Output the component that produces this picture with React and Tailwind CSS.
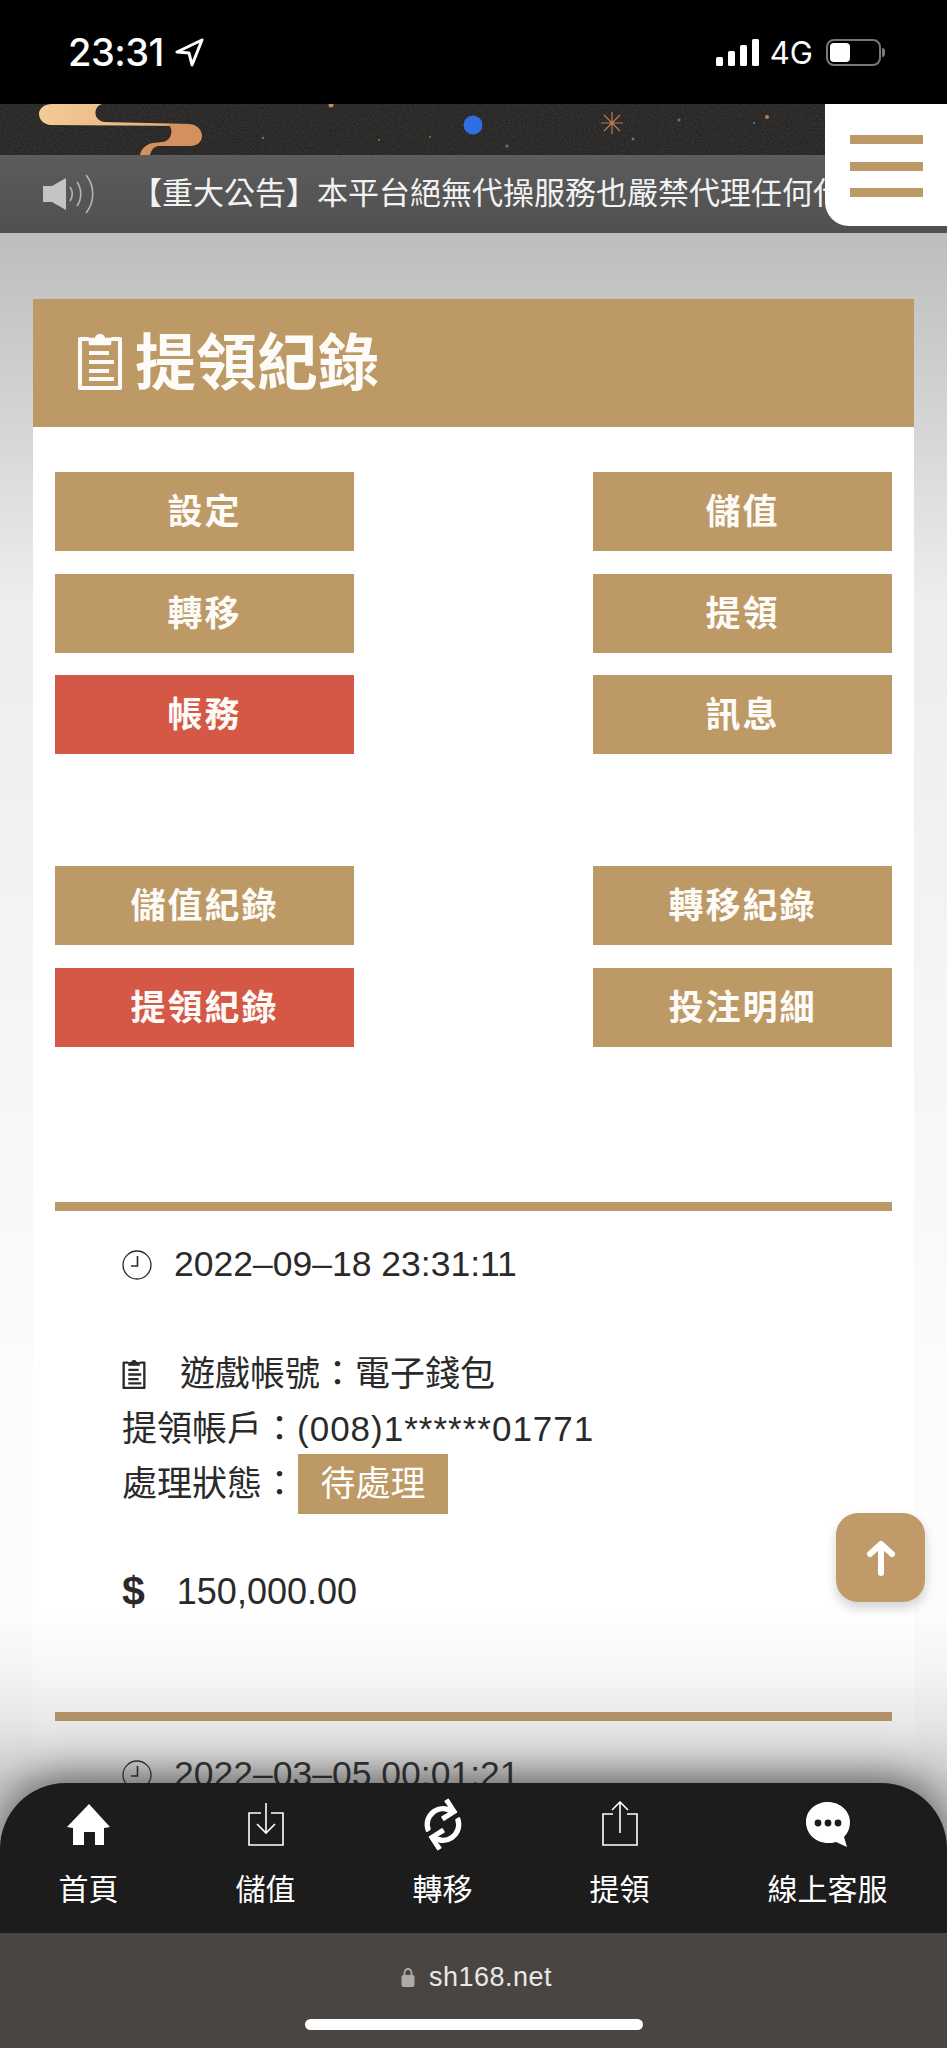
import React from 'react';
import { FaSync } from 'react-icons/fa';

const TOP_BUTTONS = [
  { label: '設定' },
  { label: '儲值' },
  { label: '轉移' },
  { label: '提領' },
  { label: '帳務', active: true },
  { label: '訊息' },
];

const RECORD_BUTTONS = [
  { label: '儲值紀錄' },
  { label: '轉移紀錄' },
  { label: '提領紀錄', active: true },
  { label: '投注明細' },
];

const ClipboardIcon = ({ className, strokeWidth = 4 }) => (
  <svg viewBox="0 0 46 58" className={className} fill="none" stroke="currentColor" strokeWidth={strokeWidth}>
    <path d="M12 7H3v49h40V7H34" strokeLinejoin="round" />
    <path d="M13 12V7h6a4 4 0 0 1 8 0h6v5z" fill="currentColor" strokeWidth="2.5" strokeLinejoin="round" />
    <path d="M12 21h20M12 30h25M12 39h20M12 47h25" />
  </svg>
);

const ClockIcon = ({ className }) => (
  <svg viewBox="0 0 30 30" className={className} fill="none" stroke="currentColor" strokeWidth="1.3">
    <circle cx="15" cy="15" r="14" />
    <path d="M15.5 6v10H9" strokeWidth="1.6" />
  </svg>
);

const HomeIcon = () => (
  <svg viewBox="0 0 43 41" className="w-[43px] h-[41px]" fill="white">
    <path d="M22 0L43 23L37 24V41H28V28H17V41H6V24L0 23z" />
  </svg>
);

const DepositIcon = () => (
  <svg viewBox="0 0 36 43" className="w-[36px] h-[43px]" fill="none" stroke="white" strokeWidth="1.6">
    <path d="M13 10H1v32h34V10H23" />
    <path d="M18 0v30M9 21l9 9 9-9" />
  </svg>
);

const WithdrawIcon = () => (
  <svg viewBox="0 0 36 45" className="w-[36px] h-[45px]" fill="none" stroke="white" strokeWidth="1.6">
    <path d="M11 13H1v31h34V13H25" />
    <path d="M18 32V1M10 9l8-8 8 8" />
  </svg>
);

const ChatIcon = () => (
  <svg viewBox="0 0 44 45" className="w-[44px] h-[45px]">
    <path d="M22 0c12 0 22 9 22 20 0 6-2 11-6 15l3 10-11-5c-3 1-5 1-8 1C10 41 0 32 0 20S10 0 22 0z" fill="white" />
    <circle cx="12" cy="21" r="3.4" fill="#1c1c1c" />
    <circle cx="22" cy="21" r="3.4" fill="#1c1c1c" />
    <circle cx="32" cy="21" r="3.4" fill="#1c1c1c" />
  </svg>
);

const NAV_ITEMS = [
  { label: '首頁', icon: <HomeIcon />, top: 'pt-[3px]' },
  { label: '儲值', icon: <DepositIcon />, top: 'pt-[2px]' },
  { label: '轉移', icon: <FaSync className="w-[38px] h-[47px] text-white -rotate-[33deg]" />, top: 'pt-0' },
  { label: '提領', icon: <WithdrawIcon />, top: 'pt-0' },
  { label: '線上客服', icon: <ChatIcon />, top: 'pt-[1px]' },
];

const Banner = () => (
  <div className="h-[51px] shrink-0 bg-[#242221] overflow-hidden">
    <svg viewBox="0 0 947 51" className="w-[947px] h-[51px]">
      <defs>
        <linearGradient id="ribbon" x1="0" x2="1" y1="0" y2="0">
          <stop offset="0" stopColor="#f3cc98" />
          <stop offset="1" stopColor="#e3a877" />
        </linearGradient>
        <filter id="grain">
          <feTurbulence type="fractalNoise" baseFrequency="0.9" numOctaves="2" />
          <feColorMatrix values="0 0 0 0 1  0 0 0 0 1  0 0 0 0 1  0.5 0 0 0 -0.12" />
        </filter>
      </defs>
      <rect width="947" height="51" filter="url(#grain)" opacity="0.35" />
      <path d="M52 0H102C93 3 93 16 104 18L190 20V22L50 21C43 20 39 15 39 10C39 4 45 0 52 0z" fill="url(#ribbon)" />
      <path d="M168 20H188C197 20 202 26 202 32C202 38 197 42 190 42H158C153 43 151 47 150 51H140C141 45 146 40 153 39L162 38C172 37 174 25 168 20z" fill="#d4915e" />
      <circle cx="473" cy="21" r="9.5" fill="#2f6fe0" />
      <g stroke="#b87a4e" strokeWidth="1.2">
        <path d="M612 8v22M601 19h22M604 11l16 16M620 11l-16 16" />
      </g>
      <circle cx="331" cy="1" r="2.5" fill="#c58a55" />
      <circle cx="767" cy="13" r="2" fill="#c07a4e" />
      <circle cx="263" cy="34" r="1.2" fill="#4f7f95" />
      <circle cx="507" cy="42" r="1.5" fill="#4f7f95" />
      <circle cx="633" cy="35" r="1.4" fill="#4f7f95" />
      <circle cx="679" cy="16" r="1.6" fill="#4f7f95" />
      <circle cx="754" cy="19" r="1.1" fill="#4f7f95" />
      <circle cx="379" cy="36" r="1" fill="#7a7a6a" />
      <circle cx="430" cy="33" r="1" fill="#7a7a6a" />
    </svg>
  </div>
);

const NoticeBar = () => (
  <div className="h-[78px] shrink-0 flex items-center bg-[linear-gradient(to_bottom,#5c5c5c,#505050)] overflow-hidden">
    <svg viewBox="0 0 51 40" className="w-[51px] h-[40px] ml-[43px] shrink-0" fill="none">
      <path d="M0 12h9L23 4v32L9 28H0z" fill="#c4c4c4" />
      <path d="M27 13c3 4 3 10 0 14M34 8c5 7 5 17 0 24M43 1c9 11 9 27 0 38" stroke="#b5b5b5" strokeWidth="1.6" />
    </svg>
    <p className="ml-[37px] text-[31px] text-[#f2f2f2] whitespace-nowrap">【重大公告】本平台絕無代操服務也嚴禁代理任何代操行為</p>
  </div>
);

const TabButton = ({ label, active }) => (
  <button className={`h-[79px] text-[35px] leading-none font-bold tracking-[2px] text-[#fdfbf7] ${active ? 'bg-[#d55745]' : 'bg-[#bd9966]'}`}>
    {label}
  </button>
);

const Record = ({ time }) => (
  <div className="pl-[67px] text-[#2a2a2a]">
    <div className="flex items-center h-[42px] mt-[33px]">
      <ClockIcon className="w-[30px] h-[30px]" />
      <span className="ml-[22px] text-[35.5px]">{time}</span>
    </div>
    <div className="mt-[61px] text-[35px]">
      <div className="flex items-center h-[55px]">
        <ClipboardIcon className="w-[24px] h-[30px]" strokeWidth={4.5} />
        <span className="ml-[34px]">遊戲帳號：電子錢包</span>
      </div>
      <div className="flex items-center h-[55px]">提領帳戶：<span className="tracking-[1px]">(008)1******01771</span></div>
      <div className="flex items-center h-[55px]">
        <span>處理狀態：</span>
        <span className="shrink-0 flex items-center justify-center w-[150px] h-[60px] ml-[1px] bg-[#bd9966] text-white">待處理</span>
      </div>
    </div>
    <div className="flex items-center h-[42px] mt-[59px]">
      <span className="text-[41px] font-bold">$</span>
      <span className="ml-[32px] text-[36px]">150,000.00</span>
    </div>
  </div>
);

export default function App() {
  return (
    <div lang="zh-TW" className="relative w-[947px] h-[2048px] flex flex-col overflow-hidden bg-white [font-family:'Liberation_Sans','Noto_Sans_CJK_TC',sans-serif]">
      {/* Phone status bar */}
      <div className="h-[104px] shrink-0 bg-black flex items-center justify-between pl-[68px] pr-[66px] text-white">
        <div className="flex items-center">
          <span className="text-[38px] leading-none font-medium [font-family:Inter,sans-serif] tracking-[-0.5px]">23:31</span>
          <svg viewBox="0 0 29 29" className="w-[29px] h-[29px] ml-[11px]" fill="none" stroke="white" strokeWidth="3" strokeLinejoin="round">
            <path d="M27 2L2 14l12 1 3 12z" />
          </svg>
        </div>
        <div className="flex items-center">
          <svg viewBox="0 0 43 27" className="w-[43px] h-[27px]" fill="white">
            <rect x="0" y="18" width="7" height="9" rx="1.5" />
            <rect x="12" y="12" width="7" height="15" rx="1.5" />
            <rect x="24" y="6" width="7" height="21" rx="1.5" />
            <rect x="36" y="0" width="7" height="27" rx="1.5" />
          </svg>
          <span className="ml-[11px] text-[31px] leading-none [font-family:Inter,sans-serif]">4G</span>
          <div className="relative ml-[13px] w-[55px] h-[27px] rounded-[8px] border-2 border-[#777] p-[2px]">
            <div className="w-[20px] h-full rounded-[4px] bg-white" />
            <div className="absolute -right-[6px] top-[7px] w-[3px] h-[9px] rounded-r bg-[#777]" />
          </div>
        </div>
      </div>

      <Banner />
      <NoticeBar />

      {/* Menu button */}
      <div className="absolute right-0 top-[104px] w-[122px] h-[122px] bg-white rounded-bl-[24px] flex flex-col gap-[17.5px] pt-[31px] pl-[25px]">
        <div className="w-[73px] h-[9px] bg-[#bd9966]" />
        <div className="w-[73px] h-[9px] bg-[#bd9966]" />
        <div className="w-[73px] h-[9px] bg-[#bd9966]" />
      </div>

      {/* Page content */}
      <div className="relative flex-1 min-h-0 mb-[-66px] overflow-hidden px-[33px] pt-[66px] bg-[linear-gradient(to_bottom,#bdbdbd_0,#d6d6d6_197px,#ededed_367px,#f5f5f5_767px,#fcfcfc_1167px)]">
        <div className="bg-white">
          <div className="h-[128px] bg-[#bd9966] flex items-center pl-[44px] text-[#fdfbf7]">
            <ClipboardIcon className="w-[46px] h-[58px] -mt-[4px]" />
            <h1 className="ml-[12px] mt-[2px] text-[61px] leading-none font-bold">提領紀錄</h1>
          </div>

          <div className="px-[22px]">
            <div className="grid grid-cols-2 gap-x-[239px] gap-y-[22.5px] pt-[45px]">
              {TOP_BUTTONS.map(b => <TabButton key={b.label} {...b} />)}
            </div>
            <div className="grid grid-cols-2 gap-x-[239px] gap-y-[22.5px] mt-[112px]">
              {RECORD_BUTTONS.map(b => <TabButton key={b.label} {...b} />)}
            </div>

            <div className="h-[9px] bg-[#bd9966] mt-[155px]" />
            <Record time="2022–09–18 23:31:11" />
            <div className="h-[9px] bg-[#bd9966] mt-[99px]" />
            <Record time="2022–03–05 00:01:21" />
          </div>
        </div>

        {/* Fade above the bottom nav */}
        <div className="absolute left-0 right-0 bottom-0 h-[236px] bg-[linear-gradient(to_bottom,rgba(90,90,90,0)_0,rgba(90,90,90,0.05)_60px,rgba(90,90,90,0.14)_110px,rgba(90,90,90,0.3)_170px)]" />
      </div>

      {/* Back to top */}
      <div className="absolute left-[836px] top-[1513px] w-[89px] h-[89px] rounded-[22px] bg-[#c09a68] flex items-center justify-center shadow-[0_6px_12px_rgba(0,0,0,0.18)]">
        <svg viewBox="0 0 30 36" className="w-[30px] h-[36px]" fill="none" stroke="white" strokeWidth="6" strokeLinecap="round" strokeLinejoin="round">
          <path d="M15 33V4M4 14L15 4l11 10" />
        </svg>
      </div>

      {/* Bottom nav */}
      <nav className="relative z-10 h-[150px] shrink-0 bg-[#1c1c1c] rounded-t-[66px] grid grid-cols-[177px_177px_177px_177px_239px] pt-[18px] text-white shadow-[0_-6px_40px_rgba(0,0,0,0.55)]">
        {NAV_ITEMS.map(item => (
          <div key={item.label} className="flex flex-col items-center">
            <div className={`h-[47px] flex items-start ${item.top}`}>{item.icon}</div>
            <span className="mt-[22px] text-[30px] leading-[40px]">{item.label}</span>
          </div>
        ))}
      </nav>

      {/* Safari address bar */}
      <div className="relative z-10 h-[115px] shrink-0 bg-[#4a4540] flex flex-col items-center">
        <div className="flex items-center mt-[29px] h-[30px] pl-[6px]">
          <svg viewBox="0 0 14 20" className="w-[14px] h-[20px]" fill="none">
            <path d="M3.5 9V5.5a3.5 3.5 0 0 1 7 0V9" stroke="#aaa" strokeWidth="1.8" />
            <rect x="0.5" y="8" width="13" height="12" rx="2" fill="#aaa" />
          </svg>
          <span className="ml-[14px] text-[27px] tracking-[0.5px] text-[#e8e8e8]">sh168.net</span>
        </div>
        <div className="mt-[27px] w-[338px] h-[11px] rounded-full bg-white" />
      </div>
    </div>
  );
}
